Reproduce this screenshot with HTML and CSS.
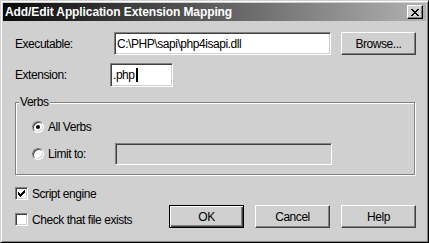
FILE: index.html
```html
<!DOCTYPE html>
<html>
<head>
<meta charset="utf-8">
<title>Add/Edit Application Extension Mapping</title>
<link rel="stylesheet" href="styles.css">
</head>
<body>
<div class="window">
  <div class="titlebar">
    <span class="title">Add/Edit Application Extension Mapping</span>
    <span class="close"><svg width="8" height="7" viewBox="0 0 8 7" shape-rendering="crispEdges"><path d="M0 0h2v1H0zM6 0h2v1H6zM1 1h2v1H1zM5 1h2v1H5zM2 2h4v1H2zM3 3h2v1H3zM2 4h4v1H2zM1 5h2v1H1zM5 5h2v1H5zM0 6h2v1H0zM6 6h2v1H6z" fill="#000"/></svg></span>
  </div>
  <div class="body">
    <div class="row">
      <span class="lbl-exe">Executable:</span>
      <div class="field f-exe">C:\PHP\sapi\php4isapi.dll</div>
      <div class="btn btn-browse">Browse...</div>
    </div>
    <div class="row row-ext">
      <span class="lbl-ext">Extension:</span>
      <div class="field f-ext">.php<span class="caret"></span></div>
    </div>
    <div class="group">
      <span class="group-label">Verbs</span>
      <div class="radio-row first">
        <div class="radio-item"><span class="radio"><span class="dot"></span></span><span>All Verbs</span></div>
      </div>
      <div class="radio-row second">
        <div class="radio-item"><span class="radio"></span><span>Limit to:</span></div>
        <div class="field f-limit"></div>
      </div>
    </div>
    <div class="bottom">
      <div class="checks">
        <div class="check-item"><span class="check"><svg width="7" height="7" viewBox="0 0 7 7" shape-rendering="crispEdges"><path d="M6 0h1v3H6v1H5v1H4v1H3v1H2V6H1V5H0V2h1v1h1v1h1V3h1V2h1V1h1z" fill="#000"/></svg></span><span>Script engine</span></div>
        <div class="check-item"><span class="check"></span><span>Check that file exists</span></div>
      </div>
      <div class="buttons">
        <div class="btn btn-default">OK</div>
        <div class="btn">Cancel</div>
        <div class="btn">Help</div>
      </div>
    </div>
  </div>
</div>
</body>
</html>
```
FILE: styles.css
```css
* { box-sizing: border-box; }
html, body { margin: 0; padding: 0; }
body {
  width: 429px;
  height: 243px;
  overflow: hidden;
  background: #d0d0d0;
  font-family: "Liberation Sans", Arial, sans-serif;
  font-size: 12px;
  letter-spacing: -0.45px;
  color: #000;
}
.window {
  width: 429px;
  height: 243px;
  background: #d0d0d0;
  border: 1px solid;
  border-color: #d0d0d0 #000 #000 #d0d0d0;
  box-shadow: inset 1px 1px #fff, inset -1px -1px #808080;
  padding: 2px;
  display: flex;
  flex-direction: column;
}
.titlebar {
  height: 18px;
  background: linear-gradient(to right, #0a0a0a, #b2b2b2);
  display: flex;
  align-items: center;
  justify-content: space-between;
  padding: 0 3px 0 2px;
}
.title {
  color: #fff;
  font-weight: bold;
  font-size: 12px;
  letter-spacing: -0.1px;
}
.close {
  width: 16px;
  height: 14px;
  background: #d0d0d0;
  border: 1px solid;
  border-color: #fff #000 #000 #fff;
  box-shadow: inset -1px -1px #808080;
  display: flex;
  align-items: center;
  justify-content: center;
}
.body {
  padding: 11px 10px 0 12px;
  display: flex;
  flex-direction: column;
}
.row { display: flex; align-items: center; }
.lbl-exe { width: 99px; }
.lbl-ext { width: 95px; }
.row-ext { margin-top: 8px; }
.field {
  height: 23px;
  background: #fff;
  border: 1px solid;
  border-color: #808080 #fff #fff #808080;
  box-shadow: inset 1px 1px #404040, inset -1px -1px #d0d0d0;
  padding: 0 2px;
  display: flex;
  align-items: center;
  white-space: nowrap;
}
.f-exe { width: 217px; }
.f-ext { width: 63px; height: 24px; }
.caret { width: 2px; height: 14px; background: #000; margin-left: 1px; }
.f-limit { width: 217px; height: 22px; background: #d0d0d0; }
.btn {
  width: 75px;
  height: 23px;
  border: 1px solid;
  border-color: #fff #404040 #404040 #fff;
  box-shadow: inset -1px -1px #808080;
  display: flex;
  align-items: center;
  justify-content: center;
}
.btn-browse { margin-left: 10px; }
.btn-default {
  border: 1px solid #000;
  box-shadow: inset 1px 1px #fff, inset -1px -1px #404040, inset -2px -2px #808080;
}
.group {
  margin-top: 15px;
  width: 400px;
  height: 73px;
  border: 1px solid #808080;
  box-shadow: 1px 1px #fff, inset 1px 1px #fff;
  display: flex;
  flex-direction: column;
  padding-left: 16px;
}
.group-label {
  align-self: flex-start;
  margin: -7px 0 0 -13px;
  padding: 0 2px 0 1px;
  background: #d0d0d0;
  line-height: 13px;
}
.radio-row { display: flex; align-items: center; }
.radio-row.first { height: 13px; margin-top: 11px; }
.radio-row.second { height: 22px; margin-top: 10px; }
.radio-item { display: flex; align-items: center; gap: 4px; width: 83px; }
.radio {
  width: 12px;
  height: 12px;
  border-radius: 50%;
  background: #fff;
  border: 1px solid;
  border-color: #808080 #fff #fff #808080;
  box-shadow: inset 1px 1px #404040, inset -1px -1px #d0d0d0;
  display: flex;
  align-items: center;
  justify-content: center;
}
.dot { width: 4px; height: 4px; border-radius: 50%; background: #000; }
.bottom {
  display: flex;
  justify-content: space-between;
  margin-top: 12px;
}
.checks { display: flex; flex-direction: column; gap: 13px; }
.check-item { display: flex; align-items: center; gap: 4px; height: 13px; }
.check {
  width: 13px;
  height: 13px;
  background: #fff;
  border: 1px solid;
  border-color: #808080 #fff #fff #808080;
  box-shadow: inset 1px 1px #404040, inset -1px -1px #d0d0d0;
  display: flex;
  align-items: center;
  justify-content: center;
}
.buttons { display: flex; gap: 11px; margin-top: 18px; }
```
